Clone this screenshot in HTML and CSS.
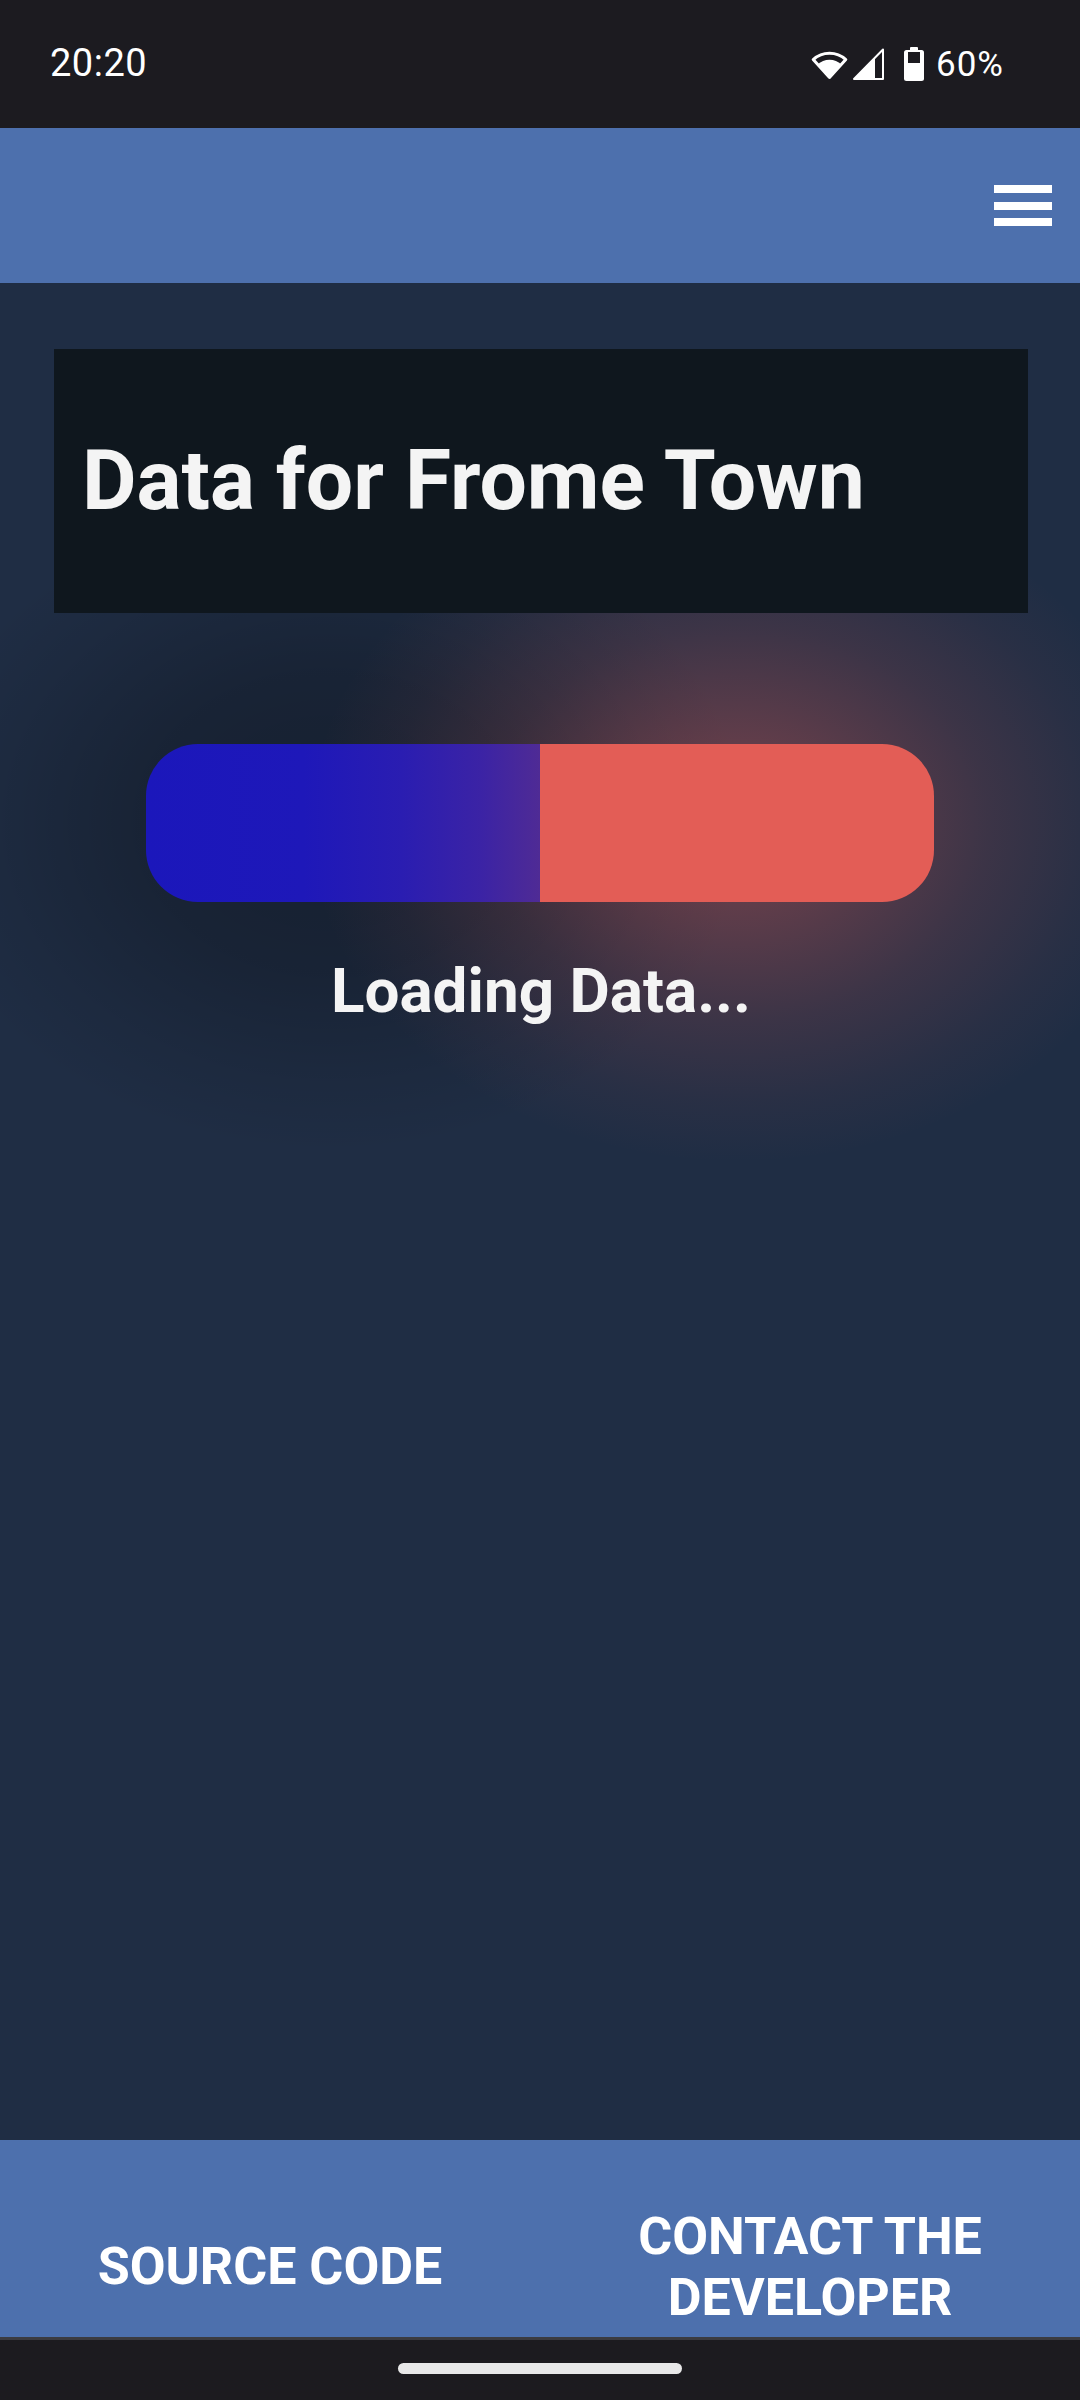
FILE: index.html
```html
<!DOCTYPE html>
<html lang="en">
<head>
<meta charset="utf-8">
<title>Data for Frome Town</title>
<link rel="stylesheet" href="styles.css">
</head>
<body>
<div class="screen">
  <div class="status-bar">
    <span class="clock">20:20</span>
    <div class="status-icons">
      <svg class="icon-wifi" width="37" height="31" viewBox="0 0 37 31">
        <path d="M18.5 28.5 L2.2 10.6 A24 24 0 0 1 34.8 10.6 Z" fill="none" stroke="#fff" stroke-width="3" stroke-linejoin="round"/>
        <path d="M18.5 28.5 L6.6 15.4 A17.5 17.5 0 0 1 30.4 15.4 Z" fill="#fff"/>
      </svg>
      <svg class="icon-signal" width="31" height="32" viewBox="0 0 31 32">
        <path d="M1 31 L30 1.5 L30 31 Z" fill="none" stroke="#fff" stroke-width="2" stroke-linejoin="round"/>
        <path d="M1 31 L22 9.6 L22 31 Z" fill="#fff"/>
      </svg>
      <svg class="icon-battery" width="20" height="34" viewBox="0 0 20 34">
        <rect x="6" y="0" width="8" height="4" rx="1" fill="#fff"/>
        <rect x="0" y="3" width="20" height="31" rx="2.5" fill="#fff"/>
        <rect x="4" y="5" width="12" height="11" fill="#1c1b20"/>
      </svg>
      <span class="battery-text">60%</span>
    </div>
  </div>

  <header class="app-header">
    <button class="menu-btn" aria-label="Menu">
      <span class="menu-bar"></span>
      <span class="menu-bar"></span>
      <span class="menu-bar"></span>
    </button>
  </header>

  <main class="content">
    <section class="title-card">
      <h1 class="title">Data for Frome Town</h1>
    </section>
    <div class="loader">
      <div class="loader-half loader-left"></div>
      <div class="loader-half loader-right"></div>
    </div>
    <p class="loading-text">Loading Data...</p>
  </main>

  <footer class="app-footer">
    <a class="footer-link">SOURCE CODE</a>
    <a class="footer-link">CONTACT THE DEVELOPER</a>
  </footer>

  <div class="nav-bar">
    <span class="nav-handle"></span>
  </div>
</div>
</body>
</html>
```

FILE: styles.css
```css
* {
  box-sizing: border-box;
}

html, body {
  margin: 0;
  padding: 0;
  background: #1f2d44;
}

body {
  font-family: Roboto, "Noto Sans", "Liberation Sans", sans-serif;
  color: #f4f4f4;
}

.screen {
  width: 1080px;
  height: 2400px;
  display: flex;
  flex-direction: column;
  overflow: hidden;
}

/* Status bar */
.status-bar {
  height: 128px;
  flex: 0 0 128px;
  background: #1c1b20;
  display: flex;
  align-items: center;
  justify-content: space-between;
  padding: 0 76px 0 50px;
  color: #ffffff;
}

.clock {
  font-size: 38px;
  font-weight: 400;
  letter-spacing: 0.5px;
  margin-top: -2px;
}

.status-icons {
  display: flex;
  align-items: center;
}

.icon-wifi {
  margin-top: 1px;
}

.icon-signal {
  margin-left: 5px;
}

.icon-battery {
  margin-left: 20px;
}

.battery-text {
  margin-left: 12px;
  font-size: 35px;
  font-weight: 400;
  letter-spacing: 1px;
}

/* Header */
.app-header {
  height: 155px;
  flex: 0 0 155px;
  background: #4d70ad;
  display: flex;
  align-items: center;
  justify-content: flex-end;
  padding-right: 28px;
}

.menu-btn {
  background: none;
  border: 0;
  padding: 0;
  display: flex;
  flex-direction: column;
  gap: 8.5px;
}

.menu-bar {
  display: block;
  width: 58px;
  height: 8px;
  background: #ffffff;
}

/* Main */
.content {
  flex: 1 1 auto;
  padding: 66px 52px 0 54px;
  display: flex;
  flex-direction: column;
  align-items: center;
  background:
    radial-gradient(ellipse 430px 340px at 738px 540px,
      rgba(227, 93, 86, 0.46) 0%,
      rgba(227, 93, 86, 0.30) 30%,
      rgba(227, 93, 86, 0.15) 58%,
      rgba(227, 93, 86, 0.05) 82%,
      rgba(227, 93, 86, 0) 100%),
    radial-gradient(ellipse 420px 330px at 330px 540px,
      rgba(0, 0, 0, 0.30) 0%,
      rgba(0, 0, 0, 0.22) 45%,
      rgba(0, 0, 0, 0.08) 78%,
      rgba(0, 0, 0, 0) 100%),
    #1f2d44;
}

.title-card {
  width: 974px;
  height: 264px;
  background: #0f171e;
  display: flex;
  align-items: center;
  padding-left: 28px;
  align-self: flex-start;
}

.title {
  margin: 0;
  font-size: 84px;
  font-weight: 700;
  line-height: 1;
  color: #f4f4f4;
}

.loader {
  margin-top: 131px;
  width: 788px;
  height: 158px;
  display: flex;
  margin-left: -2px;
}

.loader-half {
  flex: 1 1 50%;
  height: 100%;
}

.loader-left {
  border-radius: 52px 0 0 52px;
  background: linear-gradient(90deg,
    #1b17bb 0%,
    #1e18b9 40%,
    #2a1db1 65%,
    #3b23a5 85%,
    #4f2b95 100%);
}

.loader-right {
  background: #e35d56;
  border-radius: 0 52px 52px 0;
}

.loading-text {
  margin: 52px 0 0 0;
  font-size: 62px;
  font-weight: 700;
  line-height: 1.2;
  color: #f4f4f4;
}

/* Footer */
.app-footer {
  height: 197px;
  flex: 0 0 197px;
  background: #4d70ad;
  display: grid;
  grid-template-columns: 1fr 1fr;
  align-items: center;
  padding-top: 56px;
}

.footer-link {
  text-align: center;
  font-size: 52px;
  font-weight: 700;
  line-height: 61px;
  color: #ffffff;
  padding: 0 40px;
}

/* Navigation bar */
.nav-bar {
  height: 63px;
  flex: 0 0 63px;
  background: #1c1b1f;
  border-top: 3px solid #3b3b40;
  display: flex;
  justify-content: center;
  padding-top: 23px;
}

.nav-handle {
  display: block;
  width: 284px;
  height: 11px;
  border-radius: 6px;
  background: #e8e8e8;
}
```
